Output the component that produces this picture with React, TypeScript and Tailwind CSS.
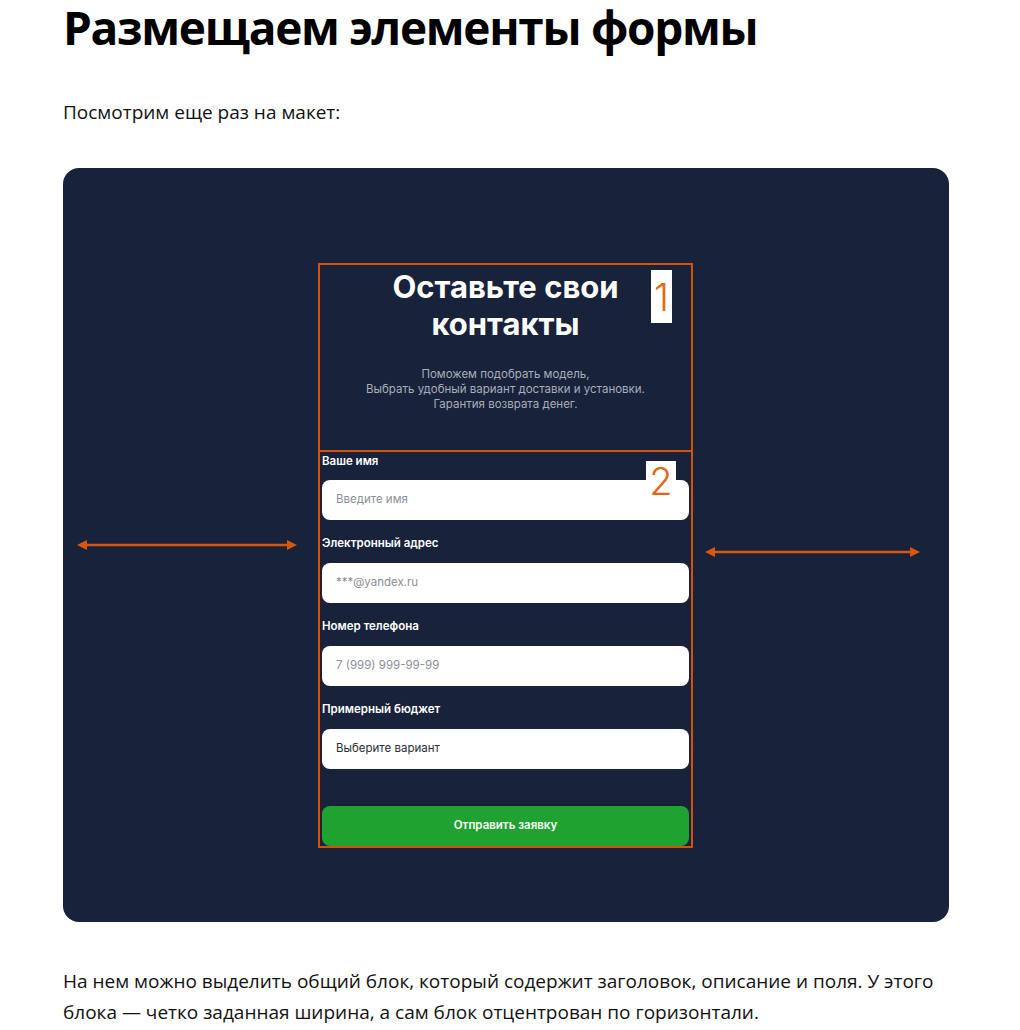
import React from 'react';

const fields = [
  { label: 'Ваше имя', placeholder: 'Введите имя', dark: false },
  { label: 'Электронный адрес', placeholder: '***@yandex.ru', dark: false },
  { label: 'Номер телефона', placeholder: '7 (999) 999-99-99', dark: false },
  { label: 'Примерный бюджет', placeholder: 'Выберите вариант', dark: true },
];

function Arrow({ width }: { width: number }) {
  return (
    <svg width={width} height="12" viewBox={`0 0 ${width} 12`} className="block">
      <line x1="8" y1="6" x2={width - 8} y2="6" stroke="#d9560d" strokeWidth="2.5" />
      <polygon points="0,6 10,1 10,11" fill="#d9560d" />
      <polygon points={`${width},6 ${width - 10},1 ${width - 10},11`} fill="#d9560d" />
    </svg>
  );
}

export default function App() {
  return (
    <div className="min-h-screen bg-white px-[63px] pb-10 font-['Open_Sans',sans-serif] text-[#111]">
      {/* Header */}
      <h1 className="text-[46px] font-bold leading-[54px] tracking-[-1.3px] text-black">
        Размещаем элементы формы
      </h1>
      <p className="mt-[43px] text-[19px] leading-[31px] font-stretch-[90%]">Посмотрим еще раз на макет:</p>

      {/* Mockup */}
      <div className="mt-[40px] flex w-[886px] rounded-[16px] bg-[#18223a] pt-[95px] pb-[74px]">
        <div className="flex-1 pl-[14px] pr-[21px] pt-[276px]">
          <Arrow width={220} />
        </div>

        <div className="w-[375px] font-['Inter',sans-serif]">
          {/* Block 1 */}
          <div className="relative h-[189px] border-2 border-[#d4530c] pt-[3px] text-center">
            <h2 className="text-[31px] font-bold leading-[37px] text-white">
              Оставьте свои
              <br />
              контакты
            </h2>
            <p className="mt-[25px] text-[11.5px] leading-[15px] text-[#a9aeba]">
              Поможем подобрать модель,
              <br />
              Выбрать удобный вариант доставки и установки.
              <br />
              Гарантия возврата денег.
            </p>
            <div className="absolute left-[331px] top-[5px] flex h-[53px] w-[21px] items-center justify-center bg-white text-[38px] font-light leading-none text-[#e8650f]">
              1
            </div>
          </div>

          {/* Block 2 */}
          <div className="relative border-2 border-t-0 border-[#d4530c] px-[2px] pt-[2px]">
            {fields.map((f, i) => (
              <div key={f.label}>
                <div className={`${i === 0 ? 'mb-[12px]' : 'mt-[16px] mb-[13px]'} text-[11.5px] font-semibold leading-[14px] text-white`}>
                  {f.label}
                </div>
                <div
                  className={`flex h-[40px] items-center rounded-[8px] bg-white px-[14px] text-[11.5px] ${
                    f.dark ? 'text-[#2b2e35]' : 'text-[#8c8f96]'
                  }`}
                >
                  {f.placeholder}
                </div>
              </div>
            ))}
            <button className="mt-[37px] flex h-[40px] w-full items-center justify-center rounded-[8px] bg-[#1fa22f] text-[11.5px] font-semibold text-white">
              Отправить заявку
            </button>
            <div className="absolute left-[326px] top-[9px] flex h-[40px] w-[30px] items-center justify-center bg-white text-[38px] font-light leading-none text-[#e8650f]">
              2
            </div>
          </div>
        </div>

        <div className="flex-1 pl-[12px] pr-[29px] pt-[283px]">
          <Arrow width={215} />
        </div>
      </div>

      <p className="mt-[44px] w-[886px] text-[19px] leading-[31px] font-stretch-[90%]">
        На нем можно выделить общий блок, который содержит заголовок, описание и поля. У этого блока — четко
        заданная ширина, а сам блок отцентрован по горизонтали.
      </p>
    </div>
  );
}
